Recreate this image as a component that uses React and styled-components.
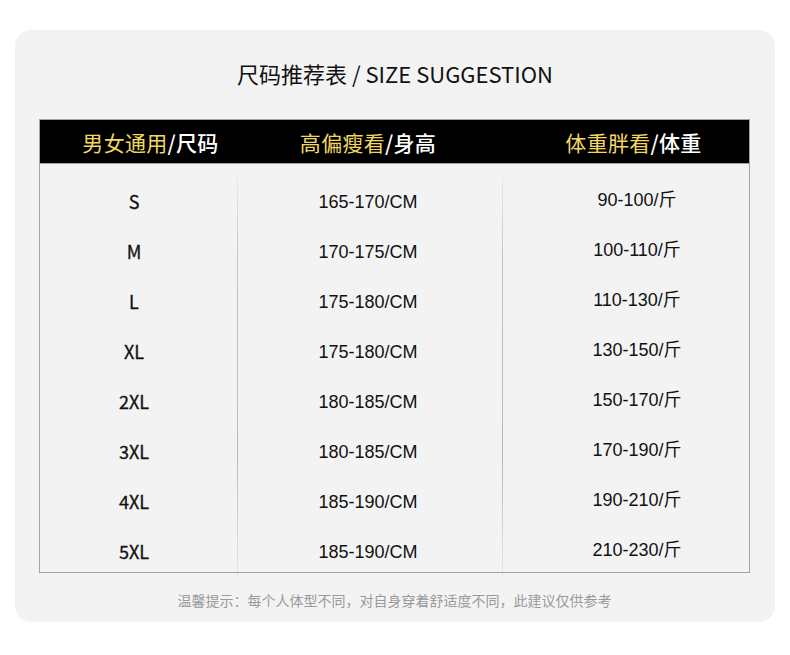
import styled, { createGlobalStyle } from "styled-components";

const GlobalStyle = createGlobalStyle`
  body {
    margin: 0;
    background: #ffffff;
    font-family: "Noto Sans CJK SC", "Noto Sans", sans-serif;
  }
`;

const rows = [
  ["S", "165-170/CM", "90-100/斤"],
  ["M", "170-175/CM", "100-110/斤"],
  ["L", "175-180/CM", "110-130/斤"],
  ["XL", "175-180/CM", "130-150/斤"],
  ["2XL", "180-185/CM", "150-170/斤"],
  ["3XL", "180-185/CM", "170-190/斤"],
  ["4XL", "185-190/CM", "190-210/斤"],
  ["5XL", "185-190/CM", "210-230/斤"],
];

const headers = [
  { gold: "男女通用", white: "尺码", shift: 24 },
  { gold: "高偏瘦看", white: "身高", shift: -3 },
  { gold: "体重胖看", white: "体重", shift: 16 },
];

export default function App() {
  return (
    <>
      <GlobalStyle />
      <Page>
        <Panel>
          <Title>尺码推荐表 / SIZE SUGGESTION</Title>
          <Table>
            <HeadRow>
              {headers.map((h) => (
                <HeadCell key={h.gold} $shift={h.shift}>
                  <Gold>{h.gold}</Gold>
                  <White>/{h.white}</White>
                </HeadCell>
              ))}
            </HeadRow>
            <Body>
              <Column $shift={-9}>
                {rows.map((r) => (
                  <SizeCell key={r[0]}>{r[0]}</SizeCell>
                ))}
              </Column>
              <Column $divider $shift={-4}>
                {rows.map((r, i) => (
                  <ValueCell key={i}>{r[1]}</ValueCell>
                ))}
              </Column>
              <Column $divider $shift={22}>
                {rows.map((r, i) => (
                  <ValueCell key={i} $lift>{r[2]}</ValueCell>
                ))}
              </Column>
            </Body>
          </Table>
          <Note>温馨提示：每个人体型不同，对自身穿着舒适度不同，此建议仅供参考</Note>
        </Panel>
      </Page>
    </>
  );
}

const Page = styled.div`
  width: 790px;
  height: 655px;
  padding: 30px 15px 0 15px;
  box-sizing: border-box;
`;

const Panel = styled.div`
  width: 760px;
  height: 592px;
  background: #f3f3f3;
  border-radius: 16px;
  padding: 21px 25px 0 24px;
  box-sizing: border-box;
  display: flex;
  flex-direction: column;
  align-items: stretch;
`;

const Title = styled.h1`
  margin: 0 0 24px 0;
  height: 44px;
  line-height: 44px;
  text-align: center;
  padding-left: 1px;
  font-size: 22px;
  font-weight: 400;
  color: #111;
`;

const Table = styled.div`
  width: 100%;
  border: 1px solid #a3a3a3;
  box-sizing: border-box;
`;

const HeadRow = styled.div`
  display: grid;
  grid-template-columns: 197px 265px 247px;
  height: 43px;
  background: #000;
  border-bottom: 1px solid #a3a3a3;
`;

const HeadCell = styled.div`
  display: flex;
  align-items: center;
  justify-content: center;
  padding-left: ${(p) => (p.$shift > 0 ? p.$shift : 0)}px;
  padding-right: ${(p) => (p.$shift < 0 ? -p.$shift : 0)}px;
  font-size: 21px;
  letter-spacing: 0.3px;
`;

const Gold = styled.span`
  color: #f3d860;
`;

const White = styled.span`
  color: #fff;
  font-weight: 500;
`;

const Body = styled.div`
  display: grid;
  grid-template-columns: 197px 265px 247px;
  padding-top: 12px;
  height: 408px;
  box-sizing: border-box;
`;

const Column = styled.div`
  display: flex;
  flex-direction: column;
  padding-left: ${(p) => (p.$shift > 0 ? p.$shift : 0)}px;
  padding-right: ${(p) => (p.$shift < 0 ? -p.$shift : 0)}px;
  border-left: ${(p) => (p.$divider ? "1px solid" : "none")};
  border-image: ${(p) =>
    p.$divider
      ? "linear-gradient(to bottom, rgba(200,200,200,0.2), #c4c4c4 20%, #b8b8b8 70%, rgba(200,200,200,0.3)) 1"
      : "none"};
  margin-bottom: 4px;
`;

const SizeCell = styled.div`
  height: 50px;
  display: flex;
  align-items: center;
  justify-content: center;
  font-size: 18px;
  color: #111;
  -webkit-text-stroke: 0.3px #111;
`;

const ValueCell = styled.div`
  height: 50px;
  display: flex;
  align-items: center;
  justify-content: center;
  font-family: "Liberation Sans", "Noto Sans CJK SC", sans-serif;
  font-size: 18px;
  color: #111;
  padding-top: ${(p) => (p.$lift ? 0 : 2)}px;
  padding-bottom: ${(p) => (p.$lift ? 6 : 0)}px;
  box-sizing: border-box;
`;

const Note = styled.p`
  margin: 17px 0 0 0;
  text-align: center;
  font-size: 14px;
  color: #9a9a9a;
`;
